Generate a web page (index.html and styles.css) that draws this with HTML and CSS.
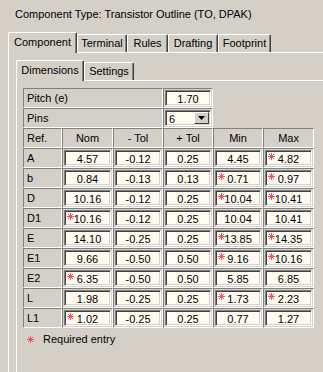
FILE: index.html
```html
<!DOCTYPE html>
<html lang="en">
<head>
    <meta charset="UTF-8">
    <title>Component Dimensions</title>
    <link rel="stylesheet" href="styles.css">
</head>
<body>

<div class="title">Component Type: Transistor Outline (TO, DPAK)</div>

<div class="tabs">
    <div class="tab active" style="width: 69px">Component</div>
    <div class="tab" style="width: 50px">Terminal</div>
    <div class="tab" style="width: 41px">Rules</div>
    <div class="tab" style="width: 50px">Drafting</div>
    <div class="tab" style="width: 53px">Footprint</div>
</div>

<div class="panel">
    <div class="tabs">
        <div class="tab active" style="width: 68px">Dimensions</div>
        <div class="tab" style="width: 50px">Settings</div>
    </div>

    <div class="panel inner">
        <table class="grid">
            <colgroup>
                <col style="width: 39px"><col style="width: 51px"><col style="width: 50px">
                <col style="width: 50px"><col style="width: 50px"><col style="width: 51px">
            </colgroup>
            <tr>
                <td colspan="3" class="label">Pitch (e)</td>
                <td><span class="box">1.70</span></td>
                <td class="blank"></td><td class="blank"></td>
            </tr>
            <tr>
                <td colspan="3" class="label">Pins</td>
                <td>
                    <span class="box select">6
                        <span class="drop"><svg width="7" height="4" viewBox="0 0 7 4"><path d="M0 0h7L3.5 4z" fill="#000"/></svg></span>
                    </span>
                </td>
                <td class="blank"></td><td class="blank"></td>
            </tr>
            <tr class="head">
                <td class="label">Ref.</td>
                <td>Nom</td>
                <td>- Tol</td>
                <td>+ Tol</td>
                <td>Min</td>
                <td>Max</td>
            </tr>
            <tbody id="dims"></tbody>
        </table>

        <div class="note">
            <svg class="star" width="7" height="7" viewBox="0 0 7 7"><path d="M3.5 0v7M0 3.5h7M1 1l5 5M6 1L1 6" stroke="#f0506a" stroke-width="1"/></svg>
            <span>Required entry</span>
        </div>
    </div>
</div>

<script>
    // ref, nom, -tol, +tol, min, max ; "*" marks a required entry
    const rows = [
        ['A',  '4.57',   '-0.12', '0.25', '4.45',   '*4.82'],
        ['b',  '0.84',   '-0.13', '0.13', '*0.71',  '*0.97'],
        ['D',  '10.16',  '-0.12', '0.25', '*10.04', '*10.41'],
        ['D1', '*10.16', '-0.12', '0.25', '10.04',  '10.41'],
        ['E',  '14.10',  '-0.25', '0.25', '*13.85', '*14.35'],
        ['E1', '9.66',   '-0.50', '0.50', '*9.16',  '*10.16'],
        ['E2', '*6.35',  '-0.50', '0.50', '5.85',   '6.85'],
        ['L',  '1.98',   '-0.25', '0.25', '*1.73',  '*2.23'],
        ['L1', '*1.02',  '-0.25', '0.25', '0.77',   '1.27']
    ];

    const star = '<svg class="req" width="7" height="7" viewBox="0 0 7 7"><path d="M3.5 0v7M0 3.5h7M1 1l5 5M6 1L1 6" stroke="#f0506a" stroke-width="1"/></svg>';
    const body = document.getElementById('dims');

    rows.forEach(r => {
        const tr = document.createElement('tr');
        let html = `<td class="label">${r[0]}</td>`;
        for (let i = 1; i < r.length; i++) {
            const req = r[i].startsWith('*');
            const val = req ? r[i].slice(1) : r[i];
            html += `<td><span class="box">${req ? star : ''}${val}</span></td>`;
        }
        tr.innerHTML = html;
        body.appendChild(tr);
    });
</script>

</body>
</html>
```

FILE: styles.css
```css
* {
    box-sizing: border-box;
}
body {
    margin: 0;
    width: 323px;
    height: 372px;
    overflow: hidden;
    background-color: #d4d0c8;
    font-family: "Liberation Sans", Arial, sans-serif;
    font-size: 11px;
    color: #000;
}
.title {
    height: 32px;
    padding: 8px 0 0 15px;
    line-height: 13px;
}
.tabs {
    display: flex;
    align-items: flex-end;
    height: 20px;
    margin-left: 8px;
}
.panel > .tabs {
    margin-left: 0;
}
.tab {
    height: 18px;
    line-height: 16px;
    text-align: center;
    background-color: #d4d0c8;
    border-top: 1px solid #fff;
    border-left: 1px solid #fff;
    border-right: 1px solid #404040;
    box-shadow: inset -1px 0 #808080;
    border-radius: 2px 2px 0 0;
}
.tab.active {
    height: 21px;
    line-height: 18px;
    margin-bottom: -1px;
    position: relative;
    z-index: 1;
}
.panel {
    border-top: 1px solid #fff;
    border-left: 1px solid #fff;
    margin-left: 8px;
    height: 320px;
    padding: 7px 0 0 7px;
}
.panel.inner {
    margin-left: 0;
    height: 292px;
    padding: 7px 0 0 6px;
}
.grid {
    border-collapse: separate;
    border-spacing: 0;
    table-layout: fixed;
    width: 291px;
}
.grid td {
    height: 20px;
    padding: 0;
    border-top: 1px solid #808080;
    border-left: 1px solid #808080;
    border-right: 1px solid #fff;
    border-bottom: 1px solid #fff;
    text-align: center;
    line-height: 16px;
}
.grid td.label {
    text-align: left;
    padding-left: 3px;
}
.grid td.blank {
    border: none;
}
.box {
    display: block;
    position: relative;
    height: 16px;
    margin: 1px;
    background-color: #fffbf0;
    border: 1px solid;
    border-color: #808080 #fff #fff #808080;
    box-shadow: inset 1px 1px #404040, inset -1px -1px #d4d0c8;
    line-height: 15px;
    text-align: center;
    padding-top: 1px;
}
.select {
    text-align: left;
    padding-left: 3px;
}
.drop {
    position: absolute;
    right: 1px;
    top: 1px;
    width: 15px;
    height: 12px;
    background-color: #d4d0c8;
    border: 1px solid;
    border-color: #fff #404040 #404040 #fff;
    display: flex;
    align-items: center;
    justify-content: center;
}
.req {
    position: absolute;
    left: 2px;
    top: 2px;
}
.note {
    display: flex;
    align-items: center;
    margin-top: 5px;
    padding-left: 4px;
    height: 12px;
}
.note span {
    margin-left: 9px;
}
```
